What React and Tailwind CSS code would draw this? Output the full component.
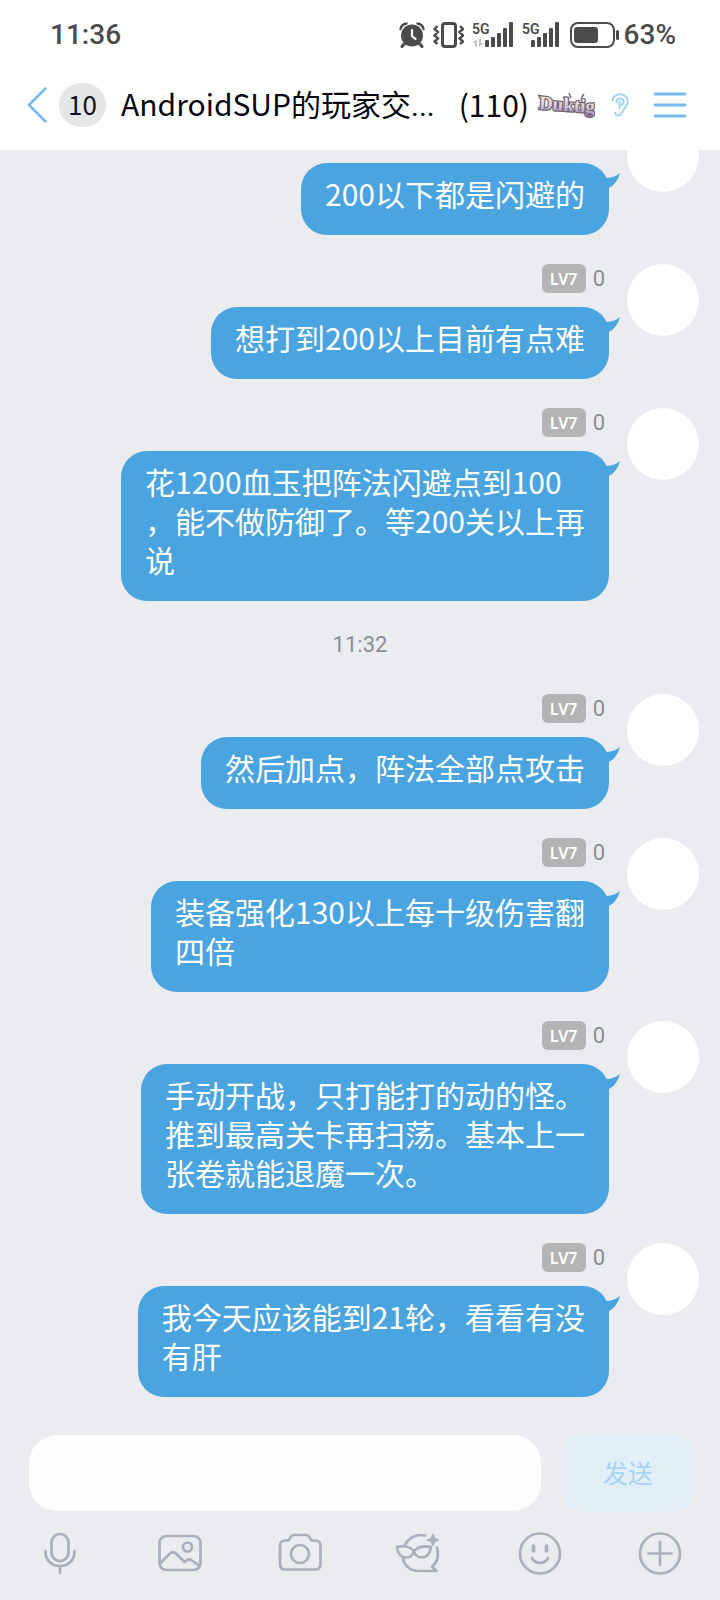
const messages = [
  { id: 1, text: '200以下都是闪避的', hideName: true },
  { id: 2, text: '想打到200以上目前有点难' },
  { id: 3, text: '花1200血玉把阵法闪避点到100\n，能不做防御了。等200关以上再\n说' },
  { id: 4, time: '11:32' },
  { id: 5, text: '然后加点，阵法全部点攻击' },
  { id: 6, text: '装备强化130以上每十级伤害翻\n四倍' },
  { id: 7, text: '手动开战，只打能打的动的怪。\n推到最高关卡再扫荡。基本上一\n张卷就能退魔一次。' },
  { id: 8, text: '我今天应该能到21轮，看看有没\n有肝' },
];

function AlarmIcon() {
  return (
    <svg width="26" height="26" viewBox="0 0 26 26" fill="none">
      <circle cx="13" cy="13.500" r="11" fill="#4b4b4b" />
      <path d="M1.500 7C2 4.500 4.500 2 7.500 1.500M18.500 1.500C21.500 2 24 4.500 24.500 7" stroke="#4b4b4b" strokeWidth="2.400" strokeLinecap="round" />
      <path d="M5.500 21.500L3 24.500M20.500 21.500L23 24.500" stroke="#4b4b4b" strokeWidth="3" strokeLinecap="round" />
      <path d="M13 8v6l3.500 3" stroke="#fff" strokeWidth="2.200" strokeLinecap="round" />
    </svg>
  );
}

function VibrateIcon() {
  return (
    <svg width="31" height="26" viewBox="0 0 31 26" fill="none" stroke="#4b4b4b">
      <rect x="9.500" y="1.500" width="13" height="23" rx="2.500" strokeWidth="3" />
      <path d="M4.500 4L1.500 7L5 10L1.500 13.500L5 16.500L1.500 19.500L4.500 22M27 4L30 7L26.500 10L30 13.500L26.500 16.500L30 19.500L27 22" strokeWidth="2.400" />
    </svg>
  );
}

function SignalIcon({ data }) {
  return (
    <svg width={data ? 42 : 38} height="26" viewBox={data ? '0 0 42 26' : '4 0 38 26'} fill="#4b4b4b">
      <text x={data ? 0 : 4} y="12" fontSize="14" fontWeight="600" fontFamily="Roboto, sans-serif">5G</text>
      {data && <path d="M5 17v8h-2v-4H0.500zM7 25v-8h2v4h2.500z" fill="#c4c4c4" />}
      <rect x="13" y="18" width="4" height="7" rx="1" />
      <rect x="19" y="15" width="4" height="10" rx="1" />
      <rect x="25" y="11" width="4" height="14" rx="1" />
      <rect x="31" y="6" width="4" height="19" rx="1" />
      <rect x="37" y="0" width="4" height="25" rx="1" />
    </svg>
  );
}

function BatteryIcon() {
  return (
    <svg width="50" height="26" viewBox="0 0 50 26" fill="none">
      <rect x="1" y="1" width="43" height="24" rx="7" stroke="#4b4b4b" strokeWidth="2" />
      <rect x="4" y="5" width="24" height="16" rx="3" fill="#4b4b4b" />
      <rect x="46" y="8" width="3" height="10" rx="1.500" fill="#4b4b4b" />
    </svg>
  );
}

function DuktigLogo() {
  return (
    <svg width="58" height="30" viewBox="0 0 58 30" role="img" aria-label="Duktig">
      <defs>
        <linearGradient id="logo" x1="0" y1="0" x2="0" y2="1">
          <stop offset="0.200" stopColor="#f6e3d2" />
          <stop offset="0.600" stopColor="#d9cbe0" />
          <stop offset="1" stopColor="#8d7bc0" />
        </linearGradient>
      </defs>
      <path d="M1 5l6 2M32 3l2 5M47 4l-3 4" stroke="#7d7078" strokeWidth="1.500" />
      <text x="2" y="21" transform="rotate(4 29 15)" fontFamily="Liberation Serif, serif" fontWeight="700" fontSize="19" fill="url(#logo)" stroke="#74676f" strokeWidth="2.600" strokeLinejoin="round" paintOrder="stroke">Duktig</text>
    </svg>
  );
}

function EarIcon() {
  return (
    <svg width="18" height="24" viewBox="0 0 18 24" fill="none" stroke="#a5d4f6" strokeWidth="2" strokeLinecap="round">
      <path d="M1.500 8C2 3.500 5 1.200 9 1.200c4.500 0 7.800 3.300 7.800 7.500 0 4-2.800 5.800-4.300 8.300-1.300 2.200-2 5.500-5 5.500-2 0-3.500-1.200-3.500-3" />
      <path d="M5.500 9.500C5.500 7 7 5.500 9 5.500s3.500 1.500 3.500 3.400c0 2-1.700 2.800-3.300 2.800M8.500 8.500v7" />
    </svg>
  );
}

function Tail() {
  return (
    <svg className="absolute top-[10px] -right-[11px]" width="20" height="16" viewBox="0 0 20 16" fill="#4aa4df">
      <path d="M0 0L5 5C11 5 16 3.500 20 0C18 7 14.500 12 9 15L0 15Z" />
    </svg>
  );
}

function Message({ text, hideName }) {
  return (
    <li className="flex justify-end gap-[18px]">
      <div className="flex flex-col items-end gap-[14px]">
        <div className="flex h-[29px] items-center gap-[7px] pr-1">
          {!hideName && (
            <>
              <span className="flex h-[29px] w-11 items-center justify-center rounded-md bg-[#b4b4b4] font-['Noto_Sans'] text-base font-semibold text-white">LV7</span>
              <span className="font-[Roboto] text-[22px] leading-[29px] text-[#8a8c97]">0</span>
            </>
          )}
        </div>
        <div className="relative rounded-[26px] bg-[#4aa4df] px-6 pt-[11px] pb-[22px]">
          <p className="text-[30px] leading-[39px] whitespace-pre text-white">{text}</p>
          <Tail />
        </div>
      </div>
      <div className="size-[72px] shrink-0 rounded-full bg-white" />
    </li>
  );
}

const toolIcons = [
  {
    label: '语音',
    icon: (
      <>
        <rect x="13.500" y="2" width="17" height="27" rx="8.500" />
        <path d="M7.500 19v1c0 8 6 14 14.500 14s14.500-6 14.500-14v-1M22 34v7" />
      </>
    ),
  },
  {
    label: '图片',
    icon: (
      <>
        <rect x="1.500" y="4" width="41" height="34" rx="7" />
        <circle cx="29.500" cy="15" r="4.500" />
        <path d="M2.500 31L12 21.500q3-2.500 6 0L26.500 30l2-1.500q3-2 5.500 0L41.500 34" />
      </>
    ),
  },
  {
    label: '拍照',
    icon: (
      <>
        <path d="M10.500 8.500L13 4.500Q14 3 16 3h12q2 0 3 1.500l2.500 4h3.500q5.500 0 5.500 5.500v18q0 5.500-5.500 5.500H7q-5 0-5-5.500V14q0-5.500 5-5.500z" />
        <circle cx="22" cy="22" r="9" />
      </>
    ),
  },
  {
    label: '匿名',
    icon: (
      <>
        <path d="M6.500 14C10 6 18 1.500 27 3.500M39 15.500c2 8 1 14.500-5 19 1 1.500 3.500 3 4.500 4.500H21C13 39 6 34 5 26" />
        <path d="M-1 15C5 13.500 12 14.500 16 19 20 15 26 13.500 33 15 32 22 29 25.500 23.500 25.500c-4 0-6.500-3-7.500-6.500C15 22.500 13 25.500 8.500 25.500 3 25.500-0.500 21-1 15z" />
        <path d="M35 3l1.400 3.600L40 8l-3.600 1.400L35 13l-1.400-3.600L30 8l3.600-1.400z" fill="#acaebb" strokeWidth="2" />
      </>
    ),
  },
  {
    label: '表情',
    icon: (
      <>
        <circle cx="22" cy="21.500" r="20" />
        <path d="M15.500 14v5M28.500 14v5" strokeWidth="3.500" />
        <path d="M14 26c3.500 6.500 12.500 6.500 16 0" />
      </>
    ),
  },
  {
    label: '更多',
    icon: (
      <>
        <circle cx="22" cy="21.500" r="20" />
        <path d="M22 10v23M10.500 21.500h23" />
      </>
    ),
  },
];

export default function App() {
  return (
    <div className="min-h-screen bg-[#ebecf0] font-['Noto_Sans_CJK_SC',sans-serif]">
      <header className="relative bg-white">
        <div className="flex h-[68px] items-center justify-between pt-0.5 pr-11 pl-[50px] font-[Roboto] text-[28px] font-medium text-[#4b4b4b]">
          <span>11:36</span>
          <div className="flex items-center">
            <div className="flex items-center gap-2">
              <AlarmIcon />
              <VibrateIcon />
              <SignalIcon data />
              <SignalIcon />
            </div>
            <div className="ml-[10px] flex items-center gap-1">
              <BatteryIcon />
              <span>63%</span>
            </div>
          </div>
        </div>
        <div className="flex h-[82px] items-center pr-[33px] pb-2 pl-[27px]">
          <button aria-label="返回" className="flex">
            <svg width="21" height="36" viewBox="0 0 21 36" fill="none" stroke="#78b9ef" strokeWidth="2.500" strokeLinecap="round" strokeLinejoin="round">
              <path d="M18.500 1.500L2 18L18.500 34.500" />
            </svg>
          </button>
          <span className="ml-[11px] flex h-11 w-[47px] items-center justify-center rounded-full bg-[#e6e6e6] pb-1 text-[26px] text-[#10131c]">10</span>
          <h1 className="ml-[15px] pb-0.5 text-[30px] leading-[44px] whitespace-nowrap text-[#05060f]">
            AndroidSUP的玩家交<span className="font-[Roboto]">...</span>
          </h1>
          <span className="ml-6 pb-0.5 text-[30px] leading-[44px] text-[#05060f]">(110)</span>
          <div className="ml-auto flex items-center">
            <DuktigLogo />
            <span className="ml-4"><EarIcon /></span>
            <button aria-label="菜单" className="ml-6 flex">
              <svg width="34" height="28" viewBox="0 0 34 28" stroke="#78b9ef" strokeWidth="2.800" strokeLinecap="round">
                <path d="M2 3h30M2 14h30M2 25h30" />
              </svg>
            </button>
          </div>
        </div>
      </header>

      <main className="overflow-hidden pr-[21px]">
        <ul className="-mt-[30px] flex flex-col gap-[29px]">
          {messages.map(m => m.time ? (
            <li key={m.id} className="h-[35px] pl-[21px] text-center font-[Roboto] text-[22px] leading-[30px] text-[#8a8c97]">{m.time}</li>
          ) : (
            <Message key={m.id} text={m.text} hideName={m.hideName} />
          ))}
        </ul>
      </main>

      <footer className="pt-[38px]">
        <form className="flex gap-[23px] pr-7 pl-[29px]" onSubmit={e => e.preventDefault()}>
          <input aria-label="消息" className="h-[76px] min-w-0 flex-1 rounded-[28px] bg-[#fdfdfd] px-6 text-[30px] outline-none" />
          <button className="h-[76px] w-32 rounded-2xl bg-[#e3eff7] text-[25px] text-[#a6d2f4]">发送</button>
        </form>
        <div className="grid h-[89px] grid-cols-6 pb-1">
          {toolIcons.map(t => (
            <button key={t.label} aria-label={t.label} className="flex items-center justify-center">
              <svg className="overflow-visible" width="44" height="43" viewBox="0 0 44 43" fill="none" stroke="#acaebb" strokeWidth="2.700" strokeLinecap="round" strokeLinejoin="round">
                {t.icon}
              </svg>
            </button>
          ))}
        </div>
      </footer>
    </div>
  );
}
